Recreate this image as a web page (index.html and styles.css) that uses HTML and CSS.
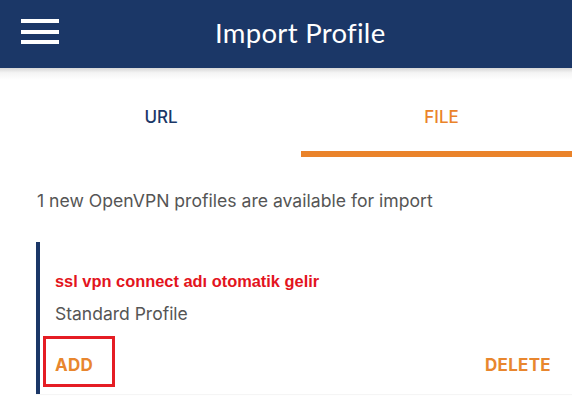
FILE: index.html
```html
<!DOCTYPE html>
<html>
<head>
<meta charset="utf-8">
<link rel="stylesheet" href="styles.css">
</head>
<body>
<header class="appbar">
  <svg class="menu" width="38" height="26" viewBox="0 0 38 26">
    <rect x="0" y="0" width="38" height="4" fill="#fff"/>
    <rect x="0" y="11" width="38" height="4" fill="#fff"/>
    <rect x="0" y="21" width="38" height="4" fill="#fff"/>
  </svg>
  <h1 class="title">Import Profile</h1>
</header>
<div class="shadow"></div>
<nav class="tabs">
  <div class="tab">URL</div>
  <div class="tab active">FILE</div>
</nav>
<p class="info">1 new OpenVPN profiles are available for import</p>
<section class="card">
  <div class="card-title">ssl vpn connect adı otomatik gelir</div>
  <div class="card-sub">Standard Profile</div>
  <div class="actions">
    <span class="btn add">ADD</span>
    <span class="btn">DELETE</span>
  </div>
</section>
</body>
</html>
```
FILE: styles.css
```css
html, body {
  margin: 0;
  padding: 0;
  background: #fff;
  width: 572px;
  height: 400px;
  overflow: hidden;
  font-family: "Inter", "Liberation Sans", sans-serif;
}
.appbar {
  height: 68px;
  background: #1b3767;
  display: flex;
  align-items: center;
  padding-left: 21px;
}
.menu {
  display: block;
  margin-top: -5px;
}
.title {
  margin: 0 0 0 156px;
  color: #fff;
  font-family: "Lato", "Open Sans", sans-serif;
  font-weight: 400;
  font-size: 27.5px;
  letter-spacing: 0.3px;
  margin-top: -4px;
}
.shadow {
  height: 12px;
  background: linear-gradient(#d6d6d6, #f4f4f4 40%, #fff);
}
.tabs {
  display: grid;
  grid-template-columns: 280px 1fr;
  padding-left: 21px;
  height: 77px;
}
.tab {
  text-align: center;
  font-size: 17px;
  font-weight: 500;
  color: #1b3767;
  padding-top: 27px;
  box-sizing: border-box;
}
.tab.active {
  color: #ea832a;
  border-bottom: 6px solid #ea832a;
  padding-left: 10px;
}
.info {
  margin: 33px 0 0 37px;
  font-size: 17.6px;
  color: #555;
  line-height: 22px;
}
.card {
  margin: 30px 0 0 36px;
  border-left: 4px solid #1b3767;
  padding: 30px 0 0 15px;
  height: 122px;
  box-sizing: content-box;
  box-shadow: 0 1px 1px rgba(0,0,0,0.04);
}
.card-title {
  font-family: "Liberation Sans", Arial, sans-serif;
  font-weight: 700;
  font-size: 16.4px;
  color: #e3141d;
  line-height: 18px;
}
.card-sub {
  margin-top: 13px;
  font-size: 17.5px;
  color: #555;
  line-height: 22px;
}
.actions {
  display: flex;
  justify-content: space-between;
  align-items: baseline;
  margin-top: 11px;
  margin-left: -12px;
  padding-right: 21px;
}
.btn {
  font-size: 17px;
  font-weight: 700;
  color: #e8862e;
  letter-spacing: 0.3px;
  line-height: 21px;
}
.btn.add {
  border: 3px solid #e51d24;
  padding: 16px 19px 8px 9px;
}
```
